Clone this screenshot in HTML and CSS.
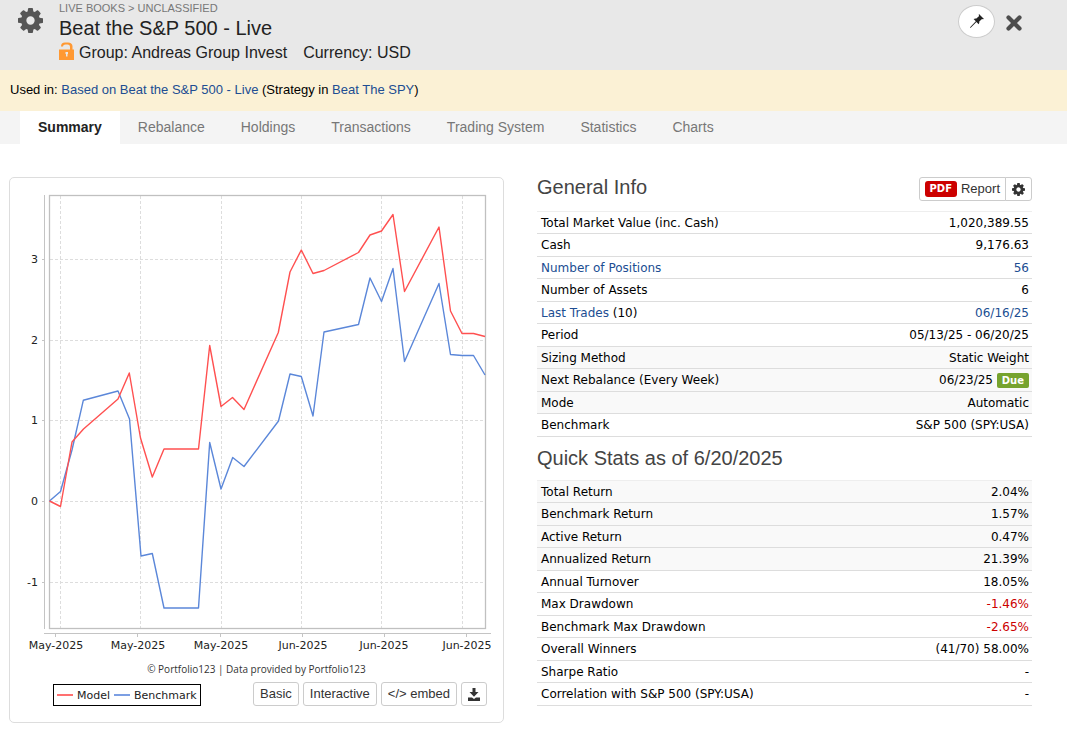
FILE: index.html
```
<!DOCTYPE html>
<html lang="en">
<head>
<meta charset="utf-8">
<meta name="viewport" content="width=device-width, initial-scale=1">
<title>Beat the S&amp;P 500 - Live</title>
<link rel="stylesheet" href="styles.css">
</head>
<body>
<svg width="0" height="0" class="defs" aria-hidden="true">
  <symbol id="gear" viewBox="0 -128 1536 1536"><path d="M1024 640q0-106-75-181t-181-75-181 75-75 181 75 181 181 75 181-75 75-181zm512-109v222q0 12-8 23t-20 13l-185 28q-19 54-39 91 35 50 107 138 10 12 10 25t-9 23q-27 37-99 108t-94 71q-12 0-26-9l-138-108q-44 23-91 38-16 136-29 186-7 28-36 28h-222q-14 0-24.500-8.500t-11.500-21.500l-28-184q-49-16-90-37l-141 107q-10 9-25 9-14 0-25-11-126-114-165-168-7-10-7-23 0-12 8-23 15-21 51-66.500t54-70.500q-27-50-41-99l-183-27q-13-2-21-12.500t-8-23.500v-222q0-12 8-23t19-13l186-28q14-46 39-92-40-57-107-138-10-12-10-24 0-10 9-23 26-36 98.500-107.500t94.500-71.500q13 0 26 10l138 107q44-23 91-38 16-136 29-186 7-28 36-28h222q14 0 24.500 8.500t11.500 21.500l28 184q49 16 90 37l142-107q9-9 24-9 13 0 25 10 129 119 165 170 7 8 7 22 0 12-8 23-15 21-51 66.500t-54 70.500q26 50 41 98l183 28q13 2 21 12.500t8 23.500z"/></symbol>
</svg>

<header class="header">
  <button class="icon-btn gear-btn" aria-label="Settings"><svg width="25" height="25"><use href="#gear"/></svg></button>
  <div class="titles">
    <div class="crumbs">LIVE BOOKS &gt; UNCLASSIFIED</div>
    <h1 class="title">Beat the S&amp;P 500 - Live</h1>
    <div class="meta">
      <svg class="lock" width="15" height="18" viewBox="0 0 15 18"><path fill="#ff9933" fill-rule="evenodd" d="M0 7.500H11V5Q11 2.500 8.500 2.500H6.500Q4 2.500 4 4.500H2Q2 .5 6 .5H9Q13 .5 13.500 4V7.500H15V18H0ZM6.500 10V12H7V14.500H8.500V12H9V10Z"/></svg>
      <span>Group: Andreas Group Invest</span>
      <span class="currency">Currency: USD</span>
    </div>
  </div>
  <button class="pin" aria-label="Pin"><svg width="14" height="14" viewBox="0 0 14 14"><path fill="#222" d="M9 0 14 5 12.800 5.300 12 4.900 9.300 7.600Q9.600 9 8.700 10.200L6.400 7.900 1.200 13.300.4 14 0 13.600.8 12.600 5.800 7.300 3.600 5.100Q5 4.300 6.400 4.600L9.100 2 8.700 1Z"/></svg></button>
  <button class="icon-btn close" aria-label="Close"><svg width="16" height="16" viewBox="0 0 16 16"><path d="M2.500 2.500 13.500 13.500M13.500 2.500 2.500 13.500" stroke="#4d4d4d" stroke-width="4.200" stroke-linecap="round"/></svg></button>
</header>

<div class="used">Used in: <a href="#">Based on Beat the S&amp;P 500 - Live</a> (Strategy in <a href="#">Beat The SPY</a>)</div>

<nav class="tabs">
  <a class="tab active" href="#">Summary</a>
  <a class="tab" href="#">Rebalance</a>
  <a class="tab" href="#">Holdings</a>
  <a class="tab" href="#">Transactions</a>
  <a class="tab" href="#">Trading System</a>
  <a class="tab" href="#">Statistics</a>
  <a class="tab" href="#">Charts</a>
</nav>

<main class="content">
  <section class="panel">
    <svg class="chart" viewBox="10 178 493 480" role="img" aria-label="Model and benchmark return">
      <g stroke="#dddddd" stroke-dasharray="3 2" fill="none">
        <path d="M60.500 196V628M140.500 196V628M221.500 196V628M301.500 196V628M381.500 196V628M462.500 196V628"/>
        <path d="M50 259.500H485M50 340.500H485M50 420.500H485M50 501.500H485M50 582.500H485"/>
      </g>
      <g stroke="#c4c4c4" fill="none">
        <path d="M44.500 195V629M42 259.500H44M42 340.500H44M42 420.500H44M42 501.500H44M42 582.500H44"/>
        <path d="M44 633.500H491M55.500 634V637M137.500 634V637M220.500 634V637M302.500 634V637M384.500 634V637M466.500 634V637"/>
      </g>
      <rect x="49.500" y="195.500" width="436" height="433" fill="none" stroke="#c0c0c0" stroke-width="1.300"/>
      <g fill="none" stroke-width="1.400" stroke-linejoin="round">
        <path stroke="#5b87d9" d="M49.500 501 60.500 491.500 72 450 83.300 400.300 118 391 129.500 419 141 556 152.300 553.500 164 608H198.500L209.700 442.500 221 489 232.700 457.500 244 466.500 278.500 421 290 374 301.300 376.500 313 416 324 332 358.500 324.500 370 278 381.500 301.500 393 268.500 404.500 361.500 439 283.500 450.500 354.500 462 355.500H473.500L485 375"/>
        <path stroke="#ff5050" d="M49.500 501 60.500 506.500 72 442 83.500 429 118 399 129.300 373 140.500 438 152.300 477 164 449H198.500L209.700 345.500 221 406.500 232.500 397.500 244 409.500 278.300 332.500 290 272 301.300 250 313 273.500 324 270.500 358.500 252.500 370 235 381.500 231 393 214.500 404.500 291.500 439 227 450.500 311 462 333.500H473.500L485 336.500"/>
      </g>
      <g class="axis y-axis">
        <text x="38" y="263">3</text><text x="38" y="344">2</text><text x="38" y="424">1</text><text x="38" y="505">0</text><text x="38" y="586">-1</text>
      </g>
      <g class="axis x-axis">
        <text x="56" y="649">May-2025</text><text x="138" y="649">May-2025</text><text x="221" y="649">May-2025</text><text x="303" y="649">Jun-2025</text><text x="384" y="649">Jun-2025</text><text x="467" y="649">Jun-2025</text>
      </g>
    </svg>
    <div class="credit">© Portfolio123 | Data provided by Portfolio123</div>
    <div class="panel-foot">
      <div class="legend"><i class="key model"></i>Model<i class="key bench"></i>Benchmark</div>
      <div class="actions">
        <button class="btn">Basic</button>
        <button class="btn">Interactive</button>
        <button class="btn">&lt;/&gt; embed</button>
        <button class="btn" aria-label="Download"><svg width="12" height="13" viewBox="0 0 12 13"><path fill="#333" d="M4.500 0H7.500V4H10.500L6 8.800 1.500 4H4.500ZM0 9.500H4L6 11 8 9.500H12V13H0Z"/></svg></button>
      </div>
    </div>
  </section>

  <section class="info">
    <div class="info-head">
      <h2>General Info</h2>
      <div class="report"><button class="btn report-btn"><b class="pdf">PDF</b>Report</button><button class="btn report-gear" aria-label="Report settings"><svg width="13" height="13"><use href="#gear"/></svg></button></div>
    </div>
    <table class="stats">
      <tr><td>Total Market Value (inc. Cash)</td><td>1,020,389.55</td></tr>
      <tr><td>Cash</td><td>9,176.63</td></tr>
      <tr><td><a href="#">Number of Positions</a></td><td><a href="#">56</a></td></tr>
      <tr><td>Number of Assets</td><td>6</td></tr>
      <tr><td><a href="#">Last Trades</a> (10)</td><td><a href="#">06/16/25</a></td></tr>
      <tr><td>Period</td><td>05/13/25 - 06/20/25</td></tr>
      <tr class="shade"><td>Sizing Method</td><td>Static Weight</td></tr>
      <tr class="shade"><td>Next Rebalance (Every Week)</td><td>06/23/25 <b class="due">Due</b></td></tr>
      <tr class="shade"><td>Mode</td><td>Automatic</td></tr>
      <tr><td>Benchmark</td><td>S&amp;P 500 (SPY:USA)</td></tr>
    </table>
    <h2 class="quick">Quick Stats as of 6/20/2025</h2>
    <table class="stats">
      <tr class="shade"><td>Total Return</td><td>2.04%</td></tr>
      <tr class="shade"><td>Benchmark Return</td><td>1.57%</td></tr>
      <tr class="shade"><td>Active Return</td><td>0.47%</td></tr>
      <tr class="shade"><td>Annualized Return</td><td>21.39%</td></tr>
      <tr><td>Annual Turnover</td><td>18.05%</td></tr>
      <tr><td>Max Drawdown</td><td class="neg">-1.46%</td></tr>
      <tr><td>Benchmark Max Drawdown</td><td class="neg">-2.65%</td></tr>
      <tr><td>Overall Winners</td><td>(41/70) 58.00%</td></tr>
      <tr><td>Sharpe Ratio</td><td>-</td></tr>
      <tr><td>Correlation with S&amp;P 500 (SPY:USA)</td><td>-</td></tr>
    </table>
  </section>
</main>
</body>
</html>
```
FILE: styles.css
```
* { box-sizing: border-box; }
body { margin: 0; background: #fff; color: #000; font: 13px/18px "Liberation Sans", Arial, sans-serif; }
.defs { position: absolute; }
a { color: #204d92; text-decoration: none; }
button { font: inherit; cursor: pointer; }
h1, h2 { margin: 0; font-weight: 400; }

.header { display: flex; align-items: flex-start; background: #e8e8e8; height: 70px; padding: 0 45px 0 18px; color: #222; }
.icon-btn { border: 0; background: none; padding: 0; display: flex; }
.gear-btn { margin: 8px 16px 0 0; fill: #555; }
.titles { flex: 1; }
.crumbs { font-size: 11px; line-height: 16px; color: #777; }
.title { font-size: 20px; line-height: 24px; }
.meta { display: flex; align-items: flex-start; padding-top: 1px; font-size: 16px; line-height: 24px; }
.lock { margin: 1px 5px 0 0; }
.currency { margin-left: 16px; }
.pin { width: 37px; height: 33px; margin-top: 5px; border: 1px solid #ccc; border-radius: 50%; background: #fff; padding: 0 0 2px; display: flex; align-items: center; justify-content: center; }
.close { margin: 15px 0 0 11px; }

.used { background: #fbf1d5; padding: 11px 10px 12px; }
.tabs { display: flex; background: #f4f4f4; padding-left: 20px; }
.tab { padding: 0 18px; font-size: 14px; line-height: 33px; color: #777; }
.active { background: #fff; color: #222; font-weight: 700; }

.content { display: grid; grid-template-columns: 1fr 1fr; gap: 33px; align-items: start; padding: 33px 35px 7px 9px; }
.panel { border: 1px solid #ddd; border-radius: 5px; }
.chart { display: block; width: 100%; height: auto; }
.axis { font: 11px "DejaVu Sans", sans-serif; fill: #222; }
.y-axis { text-anchor: end; }
.x-axis { text-anchor: middle; }
.credit { padding-top: 1px; text-align: center; font: 10px/20px "Open Sans", sans-serif; color: #333; }
.panel-foot { display: flex; justify-content: space-between; padding: 3px 16px 16px 43px; }
.legend { display: flex; align-items: center; height: 22px; margin-top: 2px; padding: 0 3px; border: 1px solid #000; font: 11px "DejaVu Sans", sans-serif; color: #222; }
.key { width: 16px; height: 2px; margin-right: 4px; }
.model { background: #ff7070; }
.bench { background: #7c9fe3; margin-left: 4px; }
.actions { display: flex; gap: 4px; }
.btn { display: flex; align-items: center; height: 24px; padding: 0 6px; border: 1px solid #ccc; border-radius: 3px; background: #fff; color: #333; fill: #333; font-size: 13px; }

.info-head { display: flex; justify-content: space-between; align-items: flex-start; height: 34px; }
h2 { font-size: 20px; line-height: 20px; color: #444; }
.quick { padding: 11px 0 12px; }
.report { display: flex; }
.report-btn { border-radius: 3px 0 0 3px; padding: 0 5px; }
.report-gear { border-radius: 0 3px 3px 0; margin-left: -1px; }
.pdf { background: #c00; color: #fff; border-radius: 3px; padding: 0 5px; margin-right: 4px; font: 700 10px/16px "DejaVu Sans", sans-serif; }
.stats { width: 100%; border-collapse: collapse; border-top: 1px solid #eee; font: 12px/16px "DejaVu Sans", Verdana, sans-serif; }
.stats tr { height: 22px; border-bottom: 1px solid #ddd; }
.stats tr:nth-child(even) { height: 23px; }
.stats td { padding: 0 3px 0 4px; }
.stats td:last-child { text-align: right; }
.shade { background: #f9f9f9; }
.stats .neg { color: #c00; }
.due { display: inline-block; background: #76a32e; color: #fff; border-radius: 2px; padding: 0 5px; font-size: 10px; line-height: 15px; }
```
